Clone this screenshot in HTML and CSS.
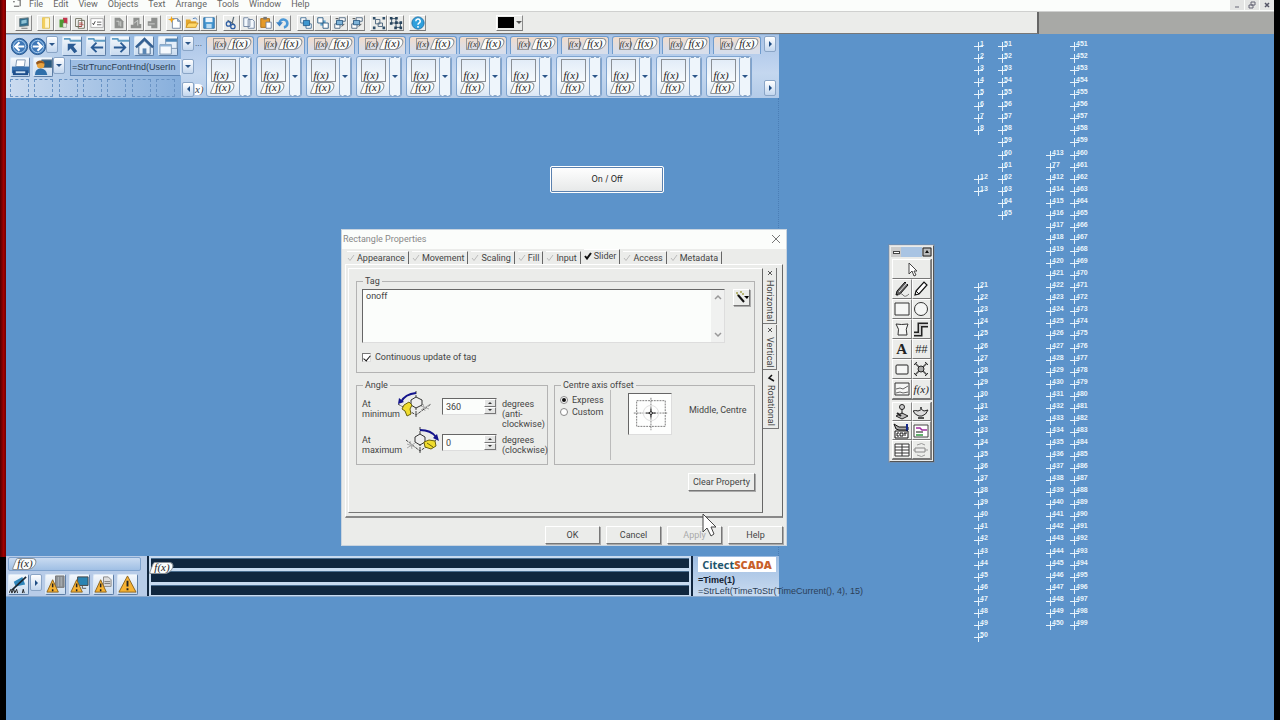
FILE: index.html
```html
<!DOCTYPE html>
<html lang="en">
<head>
<meta charset="utf-8">
<title>Graphics Builder</title>
<link rel="stylesheet" href="styles.css">
</head>
<body>
<svg class="defs" aria-hidden="true">
  <symbol id="i-screen" viewBox="0 0 16 16"><path d="M3 3l10-1v9l-10 1z" fill="#2f6e8e" stroke="#6c7b80"/><path d="M5 5l6-1v4l-6 1z" fill="#8fc3d6"/><path d="M5 14h7" stroke="#666"/></symbol>
  <symbol id="i-page" viewBox="0 0 16 16"><path d="M4 2h8v12H4z" fill="#fff6cf" stroke="#d8b84a"/><path d="M4 2h3v12H4z" fill="#f3cf5c"/></symbol>
  <symbol id="i-blocks" viewBox="0 0 16 16"><path d="M8 2h5v7H8z" fill="#c2354d"/><path d="M4 4h5v9H4z" fill="#4f9a35"/><path d="M8 8h4v5H8z" fill="#e9eedf" stroke="#888" stroke-width=".6"/></symbol>
  <symbol id="i-pages" viewBox="0 0 16 16"><path d="M3 3h7v9H3zM6 5h7v9H6z" fill="#fff" stroke="#665"/><path d="M7 8h4M7 10h5M7 12h3" stroke="#b03a3a"/></symbol>
  <symbol id="i-check" viewBox="0 0 16 16"><path d="M1 3h14v10H1z" fill="#fff" stroke="#aaa"/><path d="M3 8l1 2 2-4" fill="none" stroke="#333"/><path d="M8 7h5M8 10h5" stroke="#555"/></symbol>
  <symbol id="i-grey1" viewBox="0 0 16 16"><path d="M3 2h6l4 4v8H3z" fill="#8e908e"/><path d="M5 6h3v5M10 6v6" stroke="#d5d7d5" fill="none"/></symbol>
  <symbol id="i-grey2" viewBox="0 0 16 16"><path d="M5 2h7v7h2v5H2v-4h3z" fill="#8e908e"/><path d="M6 8l4-3v6" stroke="#d5d7d5" fill="none"/></symbol>
  <symbol id="i-grey3" viewBox="0 0 16 16"><path d="M6 2h7v12H6v-3H2V6h4z" fill="#8e908e"/><path d="M3 9h7" stroke="#d5d7d5"/></symbol>
  <symbol id="i-new" viewBox="0 0 16 16"><path d="M5 3h6l3 3v8H5z" fill="#fff" stroke="#6b7f9c"/><path d="M11 3v3h3" fill="#a8c4e6" stroke="#6b7f9c"/><path d="M4 0l1 3 3 1-3 1-1 3-1-3-3-1 3-1z" fill="#f5a714"/></symbol>
  <symbol id="i-open" viewBox="0 0 16 16"><path d="M1 13V4h5l1 2h6v7z" fill="#e5a82e"/><path d="M1 13l3-5h11l-3 5z" fill="#ffd767" stroke="#b57c12" stroke-width=".7"/><path d="M9 3q3-2 5 1" fill="none" stroke="#3c73b5"/></symbol>
  <symbol id="i-save" viewBox="0 0 16 16"><path d="M2 2h12v12H2z" fill="#4294cf" stroke="#2b6da6"/><path d="M4 2h8v5H4z" fill="#e9f3fb"/><path d="M5 9h6v5H5z" fill="#bcdcf2"/></symbol>
  <symbol id="i-cut" viewBox="0 0 16 16"><path d="M10 1L8 9M3 5l8 5" stroke="#5c6c78" stroke-width="1.4"/><circle cx="4" cy="9" r="2.5" fill="none" stroke="#2f5fa5" stroke-width="1.5"/><circle cx="9" cy="12" r="2.5" fill="none" stroke="#2f5fa5" stroke-width="1.5"/></symbol>
  <symbol id="i-copy" viewBox="0 0 16 16"><path d="M2 2h5l2 2v8H2zM7 4h5l2 2v8H7z" fill="#f3f8fd" stroke="#6b7f9c"/></symbol>
  <symbol id="i-paste" viewBox="0 0 16 16"><path d="M2 3h10v10H2z" fill="#e59a2a" stroke="#a86810"/><path d="M5 1h4v3H5z" fill="#777"/><path d="M8 7h6v7H8z" fill="#fff" stroke="#6b7f9c"/></symbol>
  <symbol id="i-undo" viewBox="0 0 16 16"><path d="M4 8a4.500 4.500 0 1 1 5 5" fill="none" stroke="#4b98d6" stroke-width="3"/><path d="M0 7h8l-4 5z" fill="#3b82c6"/></symbol>
  <symbol id="i-front" viewBox="0 0 16 16"><path d="M2 2h6v6H2zM8 9h6v5H8z" fill="#fff" stroke="#3d6b94"/><path d="M5 5h7v6H5z" fill="#3f97cf" stroke="#215b8b"/></symbol>
  <symbol id="i-back" viewBox="0 0 16 16"><path d="M5 5h6v6H5z" fill="#66a8d3"/><path d="M2 2h6v6H2zM8 8h6v6H8z" fill="#fff" stroke="#27577f"/></symbol>
  <symbol id="i-fwd" viewBox="0 0 16 16"><path d="M7 2h7v4H7zM2 9h6v5H2z" fill="#fff" stroke="#47617a"/><path d="M4 5h7v5H4z" fill="#7fb4d9" stroke="#27577f"/><path d="M3 3h3M10 12l3-3" stroke="#333"/></symbol>
  <symbol id="i-group" viewBox="0 0 16 16"><path d="M4 4h5v5H4zM7 8h5v4H7z" fill="none" stroke="#47617a"/><path d="M1 1h3v3H1zM12 1h3v3h-3zM1 12h3v3H1zM12 12h3v3h-3z" fill="#31506b"/></symbol>
  <symbol id="i-ungroup" viewBox="0 0 16 16"><path d="M3 3h5v5H3zM8 8h5v5H8z" fill="none" stroke="#27435c"/><path d="M1 1h3v3H1zM7 1h3v3H7zM1 7h3v3H1zM12 6h3v3h-3zM6 12h3v3H6zM12 12h3v3h-3zM7 6h3v3H7z" fill="#27435c"/></symbol>
  <symbol id="i-help" viewBox="0 0 16 16"><circle cx="8" cy="8" r="7" fill="#2fa0dc" stroke="#1b6fa8"/><path d="M5.500 6a2.500 2.500 0 1 1 3.500 2.200q-1 .6-1 1.800M8 11.500v2" fill="none" stroke="#fff" stroke-width="1.700"/></symbol>

  <symbol id="n-left" viewBox="0 0 20 20"><circle cx="10" cy="10" r="8.500" fill="#3f78b8" stroke="#24548b"/><circle cx="10" cy="10" r="6.500" fill="none" stroke="#a9cdee"/><path d="M15 10H6M10 5.500L5.500 10 10 14.500" fill="none" stroke="#fff" stroke-width="2.200"/></symbol>
  <symbol id="n-right" viewBox="0 0 20 20"><circle cx="10" cy="10" r="8.500" fill="#3f78b8" stroke="#24548b"/><circle cx="10" cy="10" r="6.500" fill="none" stroke="#a9cdee"/><path d="M5 10h9M10 5.500l4.500 4.500-4.500 4.500" fill="none" stroke="#fff" stroke-width="2.200"/></symbol>
  <symbol id="n-up" viewBox="0 0 20 20"><path d="M1 2h6l1 2h11" fill="none" stroke="#5f9cc4" stroke-width="2"/><path d="M5 7h9l-3 3 4 5-3 2-4-5-3 3z" fill="#2a5b94"/></symbol>
  <symbol id="n-prev" viewBox="0 0 20 20"><path d="M1 2h6l1 2h11" fill="none" stroke="#5f9cc4" stroke-width="2"/><path d="M17 11H5M10 6l-5 5 5 5" fill="none" stroke="#2a5b94" stroke-width="2"/></symbol>
  <symbol id="n-next" viewBox="0 0 20 20"><path d="M1 2h6l1 2h11" fill="none" stroke="#5f9cc4" stroke-width="2"/><path d="M3 11h12M10 6l5 5-5 5" fill="none" stroke="#2a5b94" stroke-width="2"/></symbol>
  <symbol id="n-home" viewBox="0 0 20 20"><path d="M4 10v8h12v-8l-6-6z" fill="#eef4fa" stroke="#4a6d93"/><path d="M1 11l9-9 9 9" fill="none" stroke="#335f92" stroke-width="2.500"/><path d="M8 12h4v6H8z" fill="#5b86b3"/></symbol>
  <symbol id="n-windows" viewBox="0 0 20 20"><path d="M7 2h12v10H7z" fill="#e4eef9" stroke="#7d98b5"/><path d="M7 2h12v3H7z" fill="#4d86b8"/><path d="M1 8h12v10H1z" fill="#f5f9fd" stroke="#7d98b5"/><path d="M1 8h12v2H1z" fill="#8fb4d8"/></symbol>
  <symbol id="n-print" viewBox="0 0 20 20"><path d="M6 2h9l-1 7H5z" fill="#fff" stroke="#7f98b3"/><path d="M1 9h18v7H1z" fill="#3972b0"/><path d="M2 13h16v5H2z" fill="#1f4f8c"/><path d="M5 14h10v2H5z" fill="#cbdff2"/></symbol>
  <symbol id="n-user" viewBox="0 0 20 20"><path d="M8 2h11v8H8z" fill="#285a80" stroke="#6b8397"/><circle cx="7" cy="7" r="4" fill="#e9a43f"/><path d="M1 18q0-7 6-7t7 7z" fill="#2f6faa"/><path d="M2 5q4-5 9 0v1q-5-2-8 1z" fill="#95571c"/></symbol>

  <symbol id="w-tri" viewBox="0 0 20 20"><path d="M10 1l9 17H1z" fill="#f6b233" stroke="#8d641e"/><path d="M10 6v6M10 14v2" stroke="#222" stroke-width="2"/></symbol>
  <symbol id="w-bin" viewBox="0 0 20 20"><path d="M10 1h9v12h-9z" fill="#8b9095" stroke="#777"/><path d="M13 2v10M16 2v10" stroke="#b2b7bb"/><path d="M7 5l6 13H1z" fill="#f6b233" stroke="#8d641e"/><path d="M7 9v4M7 15v2" stroke="#222" stroke-width="1.600"/></symbol>
  <symbol id="w-pc" viewBox="0 0 20 20"><path d="M8 2h11v9H8z" fill="#2a83b3" stroke="#444"/><path d="M13 11v3h4" stroke="#555" fill="none"/><path d="M7 5l6 13H1z" fill="#f6b233" stroke="#8d641e"/><path d="M7 9v4M7 15v2" stroke="#222" stroke-width="1.600"/></symbol>
  <symbol id="w-doc" viewBox="0 0 20 20"><path d="M10 2h5l3 3v7h-8z" fill="#ddd" stroke="#888"/><path d="M11 7h6M11 9h6" stroke="#777"/><path d="M7 5l6 13H1z" fill="#f6b233" stroke="#8d641e"/><path d="M7 9v4M7 15v2" stroke="#222" stroke-width="1.600"/></symbol>
  <symbol id="w-bell" viewBox="0 0 20 20"><path d="M5 7l9-5 3 8-10 2z" fill="#2f86bb"/><path d="M3 16L18 2" stroke="#1b2732" stroke-width="1.800"/><path d="M0 19l2-4 1 4 2-4 1 4 2-4 1 4M14 19l1-4 1 4" stroke="#222" fill="none"/></symbol>

  <symbol id="p-arrow" viewBox="0 0 18 18"><path d="M6 3v11l3-3 2 5 2-1-2-4h3z" fill="#fff" stroke="#444"/></symbol>
  <symbol id="p-free" viewBox="0 0 18 18"><path d="M4 11L12 2l3 3-8 9-4 1z" fill="#666" stroke="#111"/><path d="M6 12l8-9" stroke="#eee"/><path d="M4 16q4-4 6-1t6-1" fill="none" stroke="#777"/></symbol>
  <symbol id="p-line" viewBox="0 0 18 18"><path d="M4 11L12 2l3 3-8 9-4 1z" fill="#fff" stroke="#111" stroke-width="1.200"/><path d="M4 11l3 3" stroke="#111"/></symbol>
  <symbol id="p-rect" viewBox="0 0 18 18"><path d="M2 3h14v12H2z" fill="#f5f6f5" stroke="#333"/></symbol>
  <symbol id="p-circle" viewBox="0 0 18 18"><circle cx="9" cy="9" r="6.500" fill="#f5f6f5" stroke="#333"/></symbol>
  <symbol id="p-poly" viewBox="0 0 18 18"><path d="M3 4q5 1 12 0-3 5-1 11H5Q7 9 3 4z" fill="#f5f6f5" stroke="#333"/></symbol>
  <symbol id="p-pipe" viewBox="0 0 18 18"><path d="M2 14h6V5h8" fill="none" stroke="#222" stroke-width="5"/><path d="M2 14h6V5h8" fill="none" stroke="#ccc" stroke-width="2"/></symbol>
  <symbol id="p-button" viewBox="0 0 18 18"><rect x="3" y="5" width="12" height="9" rx="1" fill="#f5f6f5" stroke="#222"/></symbol>
  <symbol id="p-set" viewBox="0 0 18 18"><path d="M3 3l12 12M15 3L3 15" stroke="#555" stroke-width="1.500"/><circle cx="9" cy="9" r="3" fill="#aaa" stroke="#222"/><path d="M2 5l3-3M13 2l3 3M2 13l3 3M13 16l3-3" stroke="#333"/></symbol>
  <symbol id="p-trend" viewBox="0 0 18 18"><path d="M2 3h14v12H2z" fill="#f5f6f5" stroke="#333"/><path d="M3 9l4-1 3 1 5-3M3 13l4-1 3 1 5-1" fill="none" stroke="#666"/></symbol>
  <symbol id="p-joy" viewBox="0 0 18 18"><circle cx="9" cy="4" r="2.500" fill="#ccc" stroke="#222"/><path d="M9 6v5M3 13l6-3 6 3-6 3z" fill="#bbb" stroke="#222"/><path d="M4 10l4 3" stroke="#222" stroke-width="2"/></symbol>
  <symbol id="p-lamp" viewBox="0 0 18 18"><path d="M1 8q3-1 5 0 4-3 6 0l4-1q-2 5-6 6H7Q3 12 1 8z" fill="#ddd" stroke="#222"/><path d="M6 15h6M9 6V4" stroke="#222" stroke-width="1.500"/></symbol>
  <symbol id="p-ocx" viewBox="0 0 18 18"><path d="M1 2l5 3h9v3H6L3 7z" fill="#aaa" stroke="#111"/><path d="M14 2v7" stroke="#14288a" stroke-width="2"/><path d="M2 9h13v7H2z" fill="#fff" stroke="#111"/><path d="M6 11H4v3h2M7 11h3v3H7zM11 11h3M12 11v3" fill="none" stroke="#111"/></symbol>
  <symbol id="p-alarm" viewBox="0 0 18 18"><path d="M2 3h14v12H2z" fill="#fff" stroke="#444"/><path d="M4 6h4l2 2h5" fill="none" stroke="#a02ca0" stroke-width="1.500"/><path d="M4 10h7" stroke="#111"/><path d="M4 13h7" stroke="#2e9a3d" stroke-width="1.500"/></symbol>
  <symbol id="p-table" viewBox="0 0 18 18"><path d="M2 3h14v12H2zM2 6h14M2 9h14M2 12h14M9 3v12" fill="#fff" stroke="#333"/></symbol>
  <symbol id="p-seq" viewBox="0 0 18 18"><path d="M3 7h10v4H3z" fill="#eee" stroke="#888"/><path d="M5 4q5-3 8 0M5 14q5 3 8 0M1 9h2M13 9h3" fill="none" stroke="#999"/></symbol>
  <symbol id="tick" viewBox="0 0 8 8"><path d="M1 4l2 2.500L7 1" fill="none" stroke="currentColor"/></symbol>
</svg>

<div class="screen">
  <div class="edge edge-left"></div>
  <div class="app">
    <nav class="menu">
      <svg class="menu-icon" viewBox="0 0 12 9" aria-hidden="true"><path d="M1 2h2M6 0h3v7M2 7h6" fill="none" stroke="#444"/></svg>
      <a href="#">File</a><a href="#">Edit</a><a href="#">View</a><a href="#">Objects</a><a href="#">Text</a><a href="#">Arrange</a><a href="#">Tools</a><a href="#">Window</a><a href="#">Help</a>
      <div class="win-btns">
        <button aria-label="Minimize"><svg viewBox="0 0 8 8"><path d="M2 6h4" stroke="#667"/></svg></button>
        <button aria-label="Restore"><svg viewBox="0 0 8 8"><path d="M3 1h4v3H3zM1 4h4v3H1z" fill="none" stroke="#667"/></svg></button>
        <button aria-label="Close"><svg viewBox="0 0 8 8"><path d="M2 2l4 4M6 2L2 6" stroke="#556" stroke-width="1.500"/></svg></button>
      </div>
    </nav>
    <div class="toolrow">
      <div class="toolbar" id="toolbar"></div>
      <div class="tool-rest"></div>
    </div>

    <main class="canvas">
      <header class="ribbon">
        <div class="nav">
          <div class="nav-row">
            <button class="round" aria-label="Back"><svg><use href="#n-left"/></svg></button>
            <button class="round" aria-label="Forward"><svg><use href="#n-right"/></svg></button>
            <button class="drop" aria-label="History"></button>
            <div class="nav-set">
              <button class="nb" aria-label="Up"><svg><use href="#n-up"/></svg></button>
              <button class="nb" aria-label="Previous page"><svg><use href="#n-prev"/></svg></button>
              <button class="nb" aria-label="Next page"><svg><use href="#n-next"/></svg></button>
              <button class="nb" aria-label="Home"><svg><use href="#n-home"/></svg></button>
              <button class="nb" aria-label="Windows"><svg><use href="#n-windows"/></svg></button>
            </div>
          </div>
          <div class="nav-row second">
            <button class="nb" aria-label="Print"><svg><use href="#n-print"/></svg></button>
            <button class="nb" aria-label="User"><svg><use href="#n-user"/></svg></button>
            <button class="drop" aria-label="User menu"></button>
            <div class="user-name">=StrTruncFontHnd(UserIn</div>
          </div>
          <div class="slots" id="slots"></div>
        </div>
        <div class="scrollers">
          <div><button class="drop" aria-label="Tab list"></button><span>...</span></div>
          <div><button class="drop" aria-label="Item list"></button></div>
          <div><button class="drop to-left" aria-label="Scroll left"></button><span class="cut">x)</span></div>
        </div>
        <div class="tabs-area">
          <div class="page-tabs" id="pageTabs"></div>
          <div class="genies" id="genies"></div>
        </div>
        <div class="ends">
          <button class="drop to-right" aria-label="Next tabs"></button>
          <button class="drop to-right" aria-label="Next items"></button>
        </div>
      </header>

      <div class="page-edge"></div>
      <button class="onoff">On / Off</button>

      <footer class="statusbar">
        <div class="alarms">
          <div class="alarm-title"><span class="pill">f(x)</span></div>
          <div class="alarm-btns">
            <button class="nb" aria-label="Silence"><svg><use href="#w-bell"/></svg></button><button class="drop to-right" aria-label="More"></button>
            <button class="nb" aria-label="Disabled alarms"><svg><use href="#w-bin"/></svg></button>
            <button class="nb" aria-label="Hardware alarms"><svg><use href="#w-pc"/></svg></button>
            <button class="nb" aria-label="Alarm summary"><svg><use href="#w-doc"/></svg></button>
            <button class="nb" aria-label="Active alarms"><svg><use href="#w-tri"/></svg></button>
          </div>
        </div>
        <div class="alarm-list"><div></div><div></div><div></div><span class="pill">f(x)</span></div>
        <div class="brand">
          <div class="logo">Citect<b>SCADA</b></div>
          <div class="time">=Time(1)</div>
          <div class="date">=StrLeft(TimeToStr(TimeCurrent(), 4), 15)</div>
        </div>
      </footer>

      <div class="pins" id="pins"></div>

      <aside class="palette">
        <div class="pal-title"><button aria-label="System menu"><i></i></button><span></span><button aria-label="Roll up"><svg viewBox="0 0 10 10"><path d="M1 1h8v8H1z" fill="#bbb" stroke="#222"/><path d="M3 6l2-3 2 3z" fill="#111"/></svg></button></div>
        <div class="pal-grid">
          <button class="wide" aria-label="Select"><svg><use href="#p-arrow"/></svg></button>
          <button aria-label="Freehand"><svg><use href="#p-free"/></svg></button><button aria-label="Line"><svg><use href="#p-line"/></svg></button>
          <button aria-label="Rectangle"><svg><use href="#p-rect"/></svg></button><button aria-label="Ellipse"><svg><use href="#p-circle"/></svg></button>
          <button aria-label="Polygon"><svg><use href="#p-poly"/></svg></button><button aria-label="Pipe"><svg><use href="#p-pipe"/></svg></button>
          <button class="g-text">A</button><button class="g-num">##</button>
          <button aria-label="Button"><svg><use href="#p-button"/></svg></button><button aria-label="Symbol set"><svg><use href="#p-set"/></svg></button>
          <button aria-label="Trend"><svg><use href="#p-trend"/></svg></button><button class="g-fx">f(x)</button>
        </div>
        <div class="pal-grid lower">
          <button aria-label="Symbol"><svg><use href="#p-joy"/></svg></button><button aria-label="Genie"><svg><use href="#p-lamp"/></svg></button>
          <button aria-label="ActiveX"><svg><use href="#p-ocx"/></svg></button><button aria-label="Process analyst"><svg><use href="#p-alarm"/></svg></button>
          <button aria-label="Database"><svg><use href="#p-table"/></svg></button><button aria-label="Exchange"><svg><use href="#p-seq"/></svg></button>
        </div>
      </aside>

      <section class="dialog" aria-label="Rectangle Properties">
        <div class="dlg-title"><span>Rectangle Properties</span>
          <button aria-label="Close"><svg viewBox="0 0 10 10"><path d="M1 1l8 8M9 1L1 9" stroke="#777"/></svg></button></div>
        <div class="dlg-tabs">
          <button><svg><use href="#tick"/></svg>Appearance</button><button><svg><use href="#tick"/></svg>Movement</button><button><svg><use href="#tick"/></svg>Scaling</button><button><svg><use href="#tick"/></svg>Fill</button><button><svg><use href="#tick"/></svg>Input</button><button class="on"><svg><use href="#tick"/></svg>Slider</button><button><svg><use href="#tick"/></svg>Access</button><button><svg><use href="#tick"/></svg>Metadata</button>
        </div>
        <div class="dlg-body">
          <div class="sheet">
            <fieldset class="tag-box">
              <legend>Tag</legend>
              <div class="tag-row">
                <div class="tag-field">
                  <textarea aria-label="Tag" spellcheck="false">onoff</textarea>
                  <div class="sb"><svg viewBox="0 0 8 6"><path d="M1 5l3-3 3 3" fill="none" stroke="#999" stroke-width="1.500"/></svg><svg viewBox="0 0 8 6"><path d="M1 1l3 3 3-3" fill="none" stroke="#999" stroke-width="1.500"/></svg></div>
                </div>
                <button class="btn wizard" aria-label="Insert tag"><svg viewBox="0 0 14 14"><path d="M1 2h2M5 1h2M2 4h1M7 3h2" stroke="#a5a352" stroke-width="1.500"/><path d="M3 4l6 7" stroke="#111" stroke-width="2"/><path d="M9 5h5l-2 3z"/></svg></button>
              </div>
              <label class="check"><input type="checkbox" checked>Continuous update of tag</label>
            </fieldset>
            <div class="pair">
              <fieldset class="angle">
                <legend>Angle</legend>
                <div class="angle-row">
                  <label for="amin">At minimum</label>
                  <svg class="dial" viewBox="0 0 38 27"><path d="M20 0v26M2 13l18 11 15-11" stroke="#444" fill="none" stroke-dasharray="3 1"/><path d="M25 15l8 3M25 19l8-5M27 13l2 7" stroke="#aaa" fill="none"/><path d="M15 9l5-3 6 3v5l-6 3-5-3z" fill="#eee" stroke="#333"/><path d="M8 14l5-3 3 3-2 4 1 5-4 2-2-5-3-2z" fill="#f0dc2e" stroke="#6a6210"/><path d="M20 2Q9 3 5 11" fill="none" stroke="#14148c" stroke-width="2"/><path d="M2 13l1-6 5 4z" fill="#14148c"/></svg>
                  <div class="spin"><input id="amin" type="text" value="360"><div><button aria-label="Increase"></button><button class="down" aria-label="Decrease"></button></div></div>
                  <span>degrees<br>(anti-<br>clockwise)</span>
                </div>
                <div class="angle-row">
                  <label for="amax">At maximum</label>
                  <svg class="dial" viewBox="0 0 38 27"><path d="M19 0v26M5 13l14 11 16-11" stroke="#444" fill="none" stroke-dasharray="3 1"/><path d="M6 17l8 3M6 21l8-5M9 14l2 8" stroke="#aaa" fill="none"/><path d="M14 10l5-3 5 3v5l-5 3-5-3z" fill="#eee" stroke="#333"/><path d="M23 15l5-2 6 1 1 5-5 3-6-2z" fill="#f0dc2e" stroke="#6a6210"/><path d="M26 16l6 4" stroke="#6a6210"/><path d="M19 3q11 0 16 7" fill="none" stroke="#14148c" stroke-width="2"/><path d="M38 14l-2-7-4 4z" fill="#14148c"/></svg>
                  <div class="spin"><input id="amax" type="text" value="0"><div><button aria-label="Increase"></button><button class="down" aria-label="Decrease"></button></div></div>
                  <span>degrees<br>(clockwise)</span>
                </div>
              </fieldset>
              <fieldset class="centre">
                <legend>Centre axis offset</legend>
                <div class="radios">
                  <label><input type="radio" name="axis" checked>Express</label>
                  <label><input type="radio" name="axis">Custom</label>
                </div>
                <svg class="axis" viewBox="0 0 44 42"><path d="M8 7h30v27H8zM23 4v34M5 20h36" fill="none" stroke="#777" stroke-dasharray="2 1"/><circle cx="23" cy="20" r="8" fill="none" stroke="#ddd"/><path d="M23 15v10M18 20h10" stroke="#222"/><circle cx="23" cy="20" r="1.500" fill="#fff" stroke="#111"/></svg>
                <span class="axis-name">Middle, Centre</span>
              </fieldset>
            </div>
            <button class="btn clear">Clear Property</button>
          </div>
          <div class="side-tabs">
            <button><svg viewBox="0 0 8 8"><path d="M2 2l4 4M6 2L2 6" stroke="#555"/></svg>Horizontal</button>
            <button><svg viewBox="0 0 8 8"><path d="M2 2l4 4M6 2L2 6" stroke="#555"/></svg>Vertical</button>
            <button class="on"><svg viewBox="0 0 8 8"><path d="M7 7L2 4l3-3" fill="none" stroke="#111" stroke-width="1.500"/></svg>Rotational</button>
          </div>
        </div>
        <div class="dlg-btns">
          <button class="btn">OK</button><button class="btn">Cancel</button><button class="btn" disabled>Apply</button><button class="btn">Help</button>
        </div>
        <svg class="cursor" viewBox="0 0 15 24" aria-hidden="true"><path d="M1 1v18l4-4 4 8 3-2-3-7h5z" fill="#fff" stroke="#444"/></svg>
      </section>
    </main>
  </div>
  <div class="edge edge-right"></div>
</div>
<script src="script.js"></script>
</body>
</html>
```
FILE: styles.css
```css
* { box-sizing: border-box; }
body { margin: 0; font: 9px/10px Roboto, "Liberation Sans", sans-serif; color: #444; background: #000; }
button, input, textarea { font: inherit; color: inherit; margin: 0; padding: 0; border: 0; background: none; border-radius: 0; }
button { display: flex; align-items: center; justify-content: center; flex: none; }
.defs { position: absolute; width: 0; height: 0; }

.screen { display: flex; height: 100vh; overflow: hidden; }
.edge { flex: none; width: 6px; }
.edge-left { background: linear-gradient(90deg, #500000, #a30000 60%, #6d0000) top / 100% 557px no-repeat #000; }
.edge-right { background: #000; }
.app { flex: 1; min-width: 0; display: flex; flex-direction: column; }

/* menu and toolbar */
.menu { display: flex; align-items: flex-start; height: 12px; background: #fbfdfb; border-bottom: 1px solid #cfd0cf; padding-left: 6px; line-height: 8px; }
.menu a { color: #666; text-decoration: none; margin-right: 10px; }
.menu-icon { width: 11px; height: 8px; margin-right: 6px; }
.win-btns { margin-left: auto; display: flex; gap: 1px; }
.win-btns button { width: 14px; height: 10px; background: #e4e5e4; }
.win-btns svg { width: 8px; height: 8px; }
.toolrow { display: flex; height: 22px; }
.toolbar { flex: 1031 1 0; min-width: 520px; display: flex; align-items: center; background: #ebecea; border-right: 2px solid #666; border-bottom: 1px solid #777; padding-left: 9px; }
.tool-rest { flex: 237 1 0; background: #a8a9a6; }
.tool-group { display: flex; margin-right: 5px; }
.tool-group:nth-child(4) { margin-right: 6px; }
.tool-group:nth-child(5) { margin-right: 6px; }
.tool { width: 17px; height: 16px; border: 1px solid; border-color: #fff #8a8a8a #777 #fff; }
.tool svg { width: 14px; height: 14px; }
.swatch { margin-left: 65px; width: 27px; height: 16px; border: 1px solid; border-color: #fff #8a8a8a #777 #fff; gap: 2px; }
.swatch i { width: 16px; height: 11px; background: #000; }
.swatch::after { content: ""; border: 3px solid transparent; border-top-color: #555; border-bottom: 0; }

/* drawing area */
.canvas { position: relative; flex: 1; background: #5c93ca; overflow: hidden; }
.ribbon { display: flex; width: 773px; height: 64px; border-top: 1px solid #8fb0d6; background: linear-gradient(#a9c4e6, #bdd2ee 45%, #c4d7ef 60%, #b3cbe8); }
.nav { width: 175px; padding: 1px 0 0 4px; background: linear-gradient(90deg, #ccdcf0, #87afdc); display: flex; flex-direction: column; }
.nav-row { display: flex; height: 20px; }
.nav-row.second { margin-top: 1px; }
.nav-set { display: flex; gap: 4px; margin-left: 4px; }
.round { width: 18px; height: 20px; }
.round svg { width: 19px; height: 19px; flex: none; }
.nb { width: 20px; height: 20px; background: linear-gradient(#f4f8fc, #c9dbef); border: 1px solid #dce9f6; border-right-color: #5d7ea6; border-bottom-color: #5d7ea6; border-radius: 2px; }
.nb svg { width: 19px; height: 19px; flex: none; }
.drop { width: 12px; height: 17px; background: linear-gradient(#fff, #c2d6ee); border: 1px solid #8aa5c6; border-radius: 2px; }
.drop::after { content: ""; border: 3px solid transparent; border-top-color: #2c5689; border-bottom: 0; }
.drop.to-right::after { border: 3px solid transparent; border-left-color: #1f4d84; border-right: 0; }
.drop.to-left::after { border: 3px solid transparent; border-right-color: #1f4d84; border-left: 0; }
.second .nb { margin-right: 3px; }
.second .nb + .nb { margin-right: 0; }
.user-name { flex: 1; margin: 2px 0 0 5px; height: 17px; border: 1px solid #dce9f6; border-left-color: #6088b8; border-bottom-color: #6088b8; background: #9dbde3; padding-left: 1px; white-space: nowrap; font: 9px/14px "Liberation Sans", sans-serif; color: #2c3d52; }
.slots { display: flex; justify-content: space-between; padding: 2px 6px 0 0; }
.slots i { width: 19px; height: 18px; border: 1px dashed #6a94c5; }
.scrollers { width: 25px; display: flex; flex-direction: column; justify-content: space-between; padding: 0 0 1px 1px; color: #345; }
.scrollers div { display: flex; align-items: center; gap: 1px; height: 16px; }
.scrollers .drop { height: 15px; }
.cut { font: italic 11px/11px "Liberation Serif", serif; background: #fff; border-radius: 0 6px 6px 0; }
.tabs-area { flex: 1; min-width: 0; padding-top: 1px; }
.page-tabs { display: flex; justify-content: space-between; height: 18px; }
.page-tab { width: 48px; display: flex; gap: 4px; align-items: flex-start; padding: 1px 0 0 6px; border: 1px solid #6f9cce; border-bottom: 0; border-radius: 3px 3px 0 0; background: linear-gradient(#f2dccb, #d8deea 80%); }
.fx-box { font: italic 9px/10px "Liberation Serif", serif; border: 1px solid #999; width: 12px; color: #333; }
.pill { position: relative; z-index: 0; display: inline-block; width: 22px; text-align: center; font: italic 11px/11px "Liberation Serif", serif; color: #222; }
.pill::before { content: ""; position: absolute; z-index: -1; inset: 0 0 -1px; background: #fbfdfc; border: 1px solid #8b9299; border-radius: 2px 6px 6px 2px; transform: skewX(-22deg); }
.genies { display: flex; gap: 4px; margin-top: 2px; }
.genie { flex: none; width: 46px; height: 41px; display: flex; background: linear-gradient(#dfeaf7, #f6fafd 60%, #dbe7f5); border: 1px solid #7fa4cf; border-radius: 3px; }
.genie-main { flex: 1; display: flex; flex-direction: column; align-items: center; padding-top: 2px; }
.genie-box { width: 25px; height: 23px; flex: none; border: 1px solid #8a8f95; font: italic 11px/30px "Liberation Serif", serif; padding-left: 2px; color: #222; }
.genie .drop { height: 39px; background: #eef5fb; border-style: dashed solid; }
.ends { width: 18px; display: flex; flex-direction: column; justify-content: space-between; padding: 1px 0 2px 3px; }
.ends .drop { height: 16px; }
.page-edge { width: 773px; height: 458px; border-right: 1px dotted #4a7db5; }

.onoff { position: absolute; left: 544px; top: 132px; width: 114px; height: 27px; border: 1px solid #fff; outline: 1px solid #5a80ae; outline-offset: -2px; background: linear-gradient(#fff, #e6e8e8); border-radius: 2px; color: #222; font: 8px/10px "DejaVu Sans", sans-serif; }

/* alarm and status strip */
.statusbar { position: absolute; left: 0; top: 522px; width: 773px; height: 41px; display: flex; background: #b8cce8; border-bottom: 1px solid #8aa9cd; }
.alarms { width: 141px; padding: 1px 6px 0 2px; }
.alarm-title { height: 14px; border: 1px solid #7ea2cd; border-radius: 2px; background: linear-gradient(#c9dbf1, #9fbfe4); padding-left: 5px; margin-bottom: 3px; }
.alarm-title .pill { display: block; }
.alarm-btns { display: flex; gap: 3px; }
.alarm-btns .nb { width: 21px; height: 21px; }
.alarm-btns .nb:first-child { margin-right: -2px; }
.alarm-list { position: relative; flex: 1; display: flex; flex-direction: column; gap: 3px; padding: 2px 2px 1px; border: solid #11263f; border-width: 0 2px; background: #c8dbf0; }
.alarm-list div { flex: 1; background: #10273f; border-top: 1px solid #486c8e; }
.alarm-list .pill { position: absolute; left: 2px; top: 6px; }
.brand { width: 86px; padding: 1px 3px 0 5px; font: 9px/11px "Liberation Sans", sans-serif; white-space: nowrap; color: #2c4058; background: linear-gradient(#9dbce1, #c9dbf0); }
.logo { height: 15px; background: #fff; text-align: center; font: bold 11px/15px "Open Sans", sans-serif; color: #1f566e; margin-bottom: 3px; }
.logo b { color: #c8602a; }
.time { font-weight: bold; color: #12202f; }

/* animation points */
.pins { position: absolute; left: 968px; top: 5px; width: 120px; height: 603px; display: grid; grid-template-columns: 24px 48px 24px 24px; grid-template-rows: repeat(50, 1fr); }
.pin { position: relative; padding-left: 6px; font: bold 7px/9px "Liberation Sans", sans-serif; color: #e8f3fb; }
.pin::before { content: ""; position: absolute; left: 0; top: 3px; width: 9px; height: 9px; background: linear-gradient(#e8f3fb, #e8f3fb) center / 9px 1px no-repeat, linear-gradient(#e8f3fb, #e8f3fb) center / 1px 9px no-repeat; }

/* tool palette */
.palette { position: absolute; left: 883px; top: 211px; width: 45px; background: #ebecea; border: 1px solid; border-color: #ddd #555 #555 #ccc; padding: 1px 1px 1px 2px; display: grid; gap: 2px; box-shadow: 0 0 0 1px #6c8fb5; }
.pal-title { display: flex; height: 10px; margin: 0 0 0 -1px; background: #a9c4e3; }
.pal-title span { flex: 1; }
.pal-title button { width: 10px; background: #ccc; }
.pal-title i { width: 7px; height: 3px; border: 1px solid #444; background: #fff; }
.pal-title svg { width: 10px; height: 10px; }
.pal-grid { display: grid; grid-template-columns: 1fr 1fr; grid-auto-rows: 20px; border: 1px solid #777; border-width: 0 1px 1px 0; }
.pal-grid.lower { grid-auto-rows: 19px; }
.pal-grid button { border: 1px solid; border-color: #fff #888 #777 #fff; color: #222; overflow: hidden; }
.pal-grid svg { width: 18px; height: 18px; flex: none; }
.pal-grid .wide { grid-column: span 2; }
.pal-grid .g-text { font: bold 15px/16px "Liberation Serif", serif; }
.pal-grid .g-num { font: italic 11px/14px "Liberation Sans", sans-serif; }
.pal-grid .g-fx { font: italic 11px/14px "Liberation Serif", serif; }

/* properties dialog */
.dialog { position: absolute; left: 335px; top: 195px; width: 446px; background: #ebecea; border: 1px solid #c9d4df; padding-bottom: 1px; }
.dlg-title { display: flex; justify-content: space-between; align-items: center; height: 19px; background: #fbfdfb; padding: 0 5px 2px 1px; color: #888; }
.dlg-title svg { width: 10px; height: 10px; }
.dlg-tabs { display: flex; height: 15px; align-items: flex-end; padding-left: 5px; }
.dlg-tabs button { height: 13px; gap: 2px; padding: 0 3px 0 0; margin-right: 3px; border-right: 1px solid #666; border-top: 1px solid #fff; }
.dlg-tabs svg { width: 8px; height: 8px; color: #bbb; }
.dlg-tabs .on { height: 15px; padding-bottom: 2px; }
.dlg-tabs .on svg { color: #111; stroke-width: 2; }
.dlg-body { display: flex; margin: 0 3px 0 3px; padding: 3px 0 3px 2px; border: solid #fff; border-width: 1px 0 0 1px; border-right: 1px solid #666; border-bottom: 2px solid #888; height: 254px; }
.sheet { flex: 1; min-width: 0; border: 1px solid #fff; border-right-color: #666; border-bottom-color: #777; padding: 7px 7px 0; display: flex; flex-direction: column; }
fieldset { margin: 0; padding: 0 5px; border: 1px solid #b3b3b3; min-width: 0; }
legend { padding: 0 2px; margin-left: 1px; height: 10px; }
.tag-box { height: 97px; padding-right: 4px; }
.tag-row { display: flex; gap: 8px; margin-top: 3px; align-items: flex-start; }
.tag-field { flex: 1; display: flex; height: 54px; border: 1px solid; border-color: #666 #ddd #ddd #666; background: #fbfdfb; }
.tag-field textarea { flex: 1; resize: none; outline: none; padding: 1px 3px; overflow: hidden; }
.sb { width: 13px; display: flex; flex-direction: column; justify-content: space-between; align-items: center; padding: 4px 0; background: #f0f1f0; }
.sb svg { width: 8px; height: 6px; }
.btn { border: 1px solid; border-color: #fff #777 #777 #fff; box-shadow: 1px 1px 0 #aaa; height: 18px; }
.wizard { width: 17px; height: 17px; }
.wizard svg { width: 14px; height: 14px; }
.check { display: flex; align-items: center; gap: 4px; margin-top: 9px; }
input[type=checkbox] { appearance: none; width: 9px; height: 9px; background: #fff; border: 1px solid #777; border-right-color: #ddd; border-bottom-color: #ddd; display: grid; place-items: center; }
input[type=checkbox]:checked::after { content: ""; width: 3px; height: 6px; border: solid #111; border-width: 0 1px 1px 0; transform: rotate(40deg); }
.pair { display: grid; grid-template-columns: 192px 1fr; gap: 6px; margin-top: 7px; }
.pair fieldset { height: 85px; }
.angle-row { display: grid; grid-template-columns: 35px 39px 55px 1fr; gap: 3px; align-items: start; height: 36px; padding-top: 9px; white-space: nowrap; }
.angle-row label { white-space: normal; }
.angle-row .dial { margin: -8px 0 0 -4px; width: 38px; height: 27px; }
.angle-row:last-child .dial { margin: -8px 0 0 1px; }
.angle-row > .spin { display: flex; height: 17px; margin-top: -1px; border: 1px solid; border-color: #666 #ddd #ddd #666; background: #fbfdfb; }
.spin input { flex: 1; min-width: 0; padding-left: 3px; outline: none; }
.spin div { width: 12px; display: flex; flex-direction: column; }
.spin button { flex: 1; background: #e4e5e4; border: 1px solid; border-color: #fff #777 #777 #fff; }
.spin button::after { content: ""; border: 2px solid transparent; border-bottom-color: #333; border-top: 0; }
.spin .down::after { border: 2px solid transparent; border-top-color: #333; border-bottom: 0; }
.angle-row > span { margin-left: 2px; }
.centre .radios { float: left; width: 51px; height: 70px; padding-top: 4px; border-right: 1px solid #bbb; }
.radios label { display: flex; align-items: center; gap: 4px; height: 12px; }
input[type=radio] { appearance: none; width: 8px; height: 8px; border: 1px solid #888; border-radius: 50%; background: #fff; display: grid; place-items: center; }
input[type=radio]:checked::after { content: ""; width: 4px; height: 4px; border-radius: 50%; background: #111; }
.axis { float: left; width: 44px; height: 42px; margin: 3px 17px 0; background: #fdfefd; border: 1px solid; border-color: #666 #ddd #ddd #666; }
.axis-name { display: block; padding-top: 15px; white-space: nowrap; }
.clear { align-self: flex-end; width: 67px; margin-top: 8px; }
.side-tabs { width: 19px; display: flex; flex-direction: column; padding-right: 4px; }
.side-tabs button { writing-mode: vertical-rl; width: 14px; height: 56px; gap: 3px; border-right: 1px solid #777; border-bottom: 1px solid #777; margin-bottom: 1px; }
.side-tabs button + button { height: 45px; }
.side-tabs button.on { width: 16px; height: 58px; }
.side-tabs svg { width: 8px; height: 8px; flex: none; }
.dlg-btns { display: flex; justify-content: flex-end; gap: 6px; padding: 8px 3px 0 0; }
.dlg-btns .btn { width: 55px; }
.btn:disabled { color: #aaa; }
.cursor { position: absolute; left: 360px; top: 283px; width: 15px; height: 24px; }
```
FILE: script.js
```js
const make = (tag, cls, html = "") => {
  const el = document.createElement(tag);
  el.className = cls;
  el.innerHTML = html;
  return el;
};

const groups = [
  ["screen"], ["page", "blocks", "pages", "check"], ["grey1", "grey2", "grey3"],
  ["new", "open", "save"], ["cut", "copy", "paste", "undo"],
  ["front", "back", "fwd", "fwd"], ["group", "ungroup"], ["help"]
];
const bar = document.getElementById("toolbar");
groups.forEach(names => {
  const g = make("div", "tool-group");
  names.forEach(n => {
    const b = make("button", "tool", `<svg><use href="#i-${n}"/></svg>`);
    b.setAttribute("aria-label", n);
    g.append(b);
  });
  bar.append(g);
});
const swatch = make("button", "swatch", "<i></i>");
swatch.setAttribute("aria-label", "Colour");
bar.append(swatch);

for (let i = 0; i < 7; i++) document.getElementById("slots").append(make("i", ""));
for (let i = 0; i < 11; i++) {
  document.getElementById("pageTabs").append(
    make("div", "page-tab", '<span class="fx-box">f(x)</span><span class="pill">f(x)</span>'));
  document.getElementById("genies").append(
    make("div", "genie", '<div class="genie-main"><div class="genie-box">f(x)</div><span class="pill">f(x)</span></div><button class="drop" aria-label="Open menu"></button>'));
}

const pins = document.getElementById("pins");
const pin = (col, row, n) => {
  const el = make("span", "pin", String(n));
  el.style.gridArea = `${row} / ${col}`;
  pins.append(el);
};
for (let n = 1; n <= 50; n++) if (n <= 8 || n === 12 || n === 13 || n >= 21) pin(1, n, n);
for (let n = 51; n <= 65; n++) pin(2, n - 50, n);
[413, 77, 412].forEach((n, i) => pin(3, 10 + i, n));
for (let n = 414; n <= 450; n++) pin(3, n - 401, n);
for (let n = 451; n <= 499; n++) pin(4, n - 450, n);
```
